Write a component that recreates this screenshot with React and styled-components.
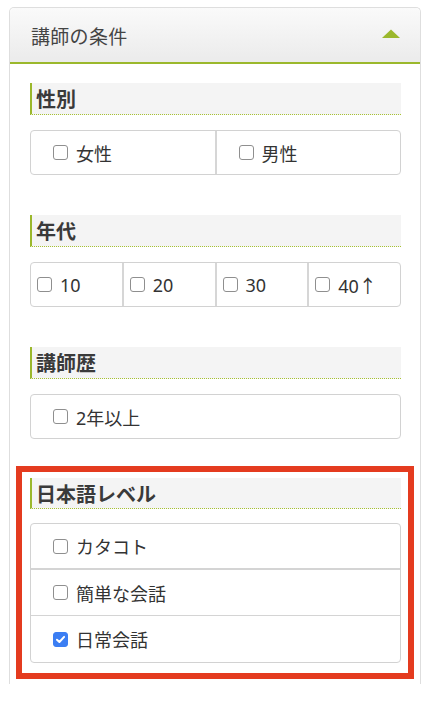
import styled, { createGlobalStyle } from "styled-components";

const GlobalStyle = createGlobalStyle`
  body {
    margin: 0;
    background: #ffffff;
    font-family: "Noto Sans CJK JP", "Noto Sans", sans-serif;
    color: #333;
  }
`;

const sections = [
  { title: "性別", pad: 22, options: [{ label: "女性" }, { label: "男性" }] },
  {
    title: "年代",
    pad: 6,
    options: [{ label: "10" }, { label: "20" }, { label: "30" }, { label: "40↑" }],
  },
  { title: "講師歴", pad: 22, options: [{ label: "2年以上" }] },
];

const levels = [
  { label: "カタコト", checked: false },
  { label: "簡単な会話", checked: false },
  { label: "日常会話", checked: true },
];

const Check = ({ checked }) => (
  <CheckBox $checked={checked}>
    {checked && (
      <svg width="11" height="11" viewBox="0 0 10 10">
        <path d="M1.8 5.2 L4 7.3 L8.3 2.6" fill="none" stroke="#fff" strokeWidth="1.8" strokeLinecap="round" strokeLinejoin="round" />
      </svg>
    )}
  </CheckBox>
);

const Section = ({ title, pad, options }) => (
  <SectionWrap>
    <SectionHead>{title}</SectionHead>
    <OptionRow>
      {options.map((opt) => (
        <Cell key={opt.label} $pad={pad}>
          <Check checked={opt.checked} />
          <Label>{opt.label}</Label>
        </Cell>
      ))}
    </OptionRow>
  </SectionWrap>
);

const App = () => {
  return (
    <>
      <GlobalStyle />
      <Panel>
        <PanelHeader>
          <Title>講師の条件</Title>
          <svg width="18" height="9" viewBox="0 0 18 9">
            <polygon points="0,9 9,0.5 18,9" fill="#9bb82c" />
          </svg>
        </PanelHeader>
        <Content>
          {sections.map((s) => (
            <Section key={s.title} {...s} />
          ))}
          <Highlight>
            <SectionHead $short>日本語レベル</SectionHead>
            <OptionList>
              {levels.map((lv, i) => (
                <ListRow key={lv.label} $divider={i === 0 ? 2 : i === 1 ? 1 : 0}>
                  <Check checked={lv.checked} />
                  <Label>{lv.label}</Label>
                </ListRow>
              ))}
            </OptionList>
          </Highlight>
        </Content>
      </Panel>
    </>
  );
};

export default App;

const Panel = styled.div`
  margin: 7px 10px 0 9px;
  border: 1px solid #dedede;
  border-bottom: none;
  border-radius: 5px 5px 0 0;
  background: #fff;
`;

const PanelHeader = styled.div`
  height: 54px;
  display: flex;
  align-items: center;
  justify-content: space-between;
  padding: 0 20px 0 21px;
  background: linear-gradient(#fafafa, #ebebeb);
  border-bottom: 2px solid #9bb82c;
  border-radius: 5px 5px 0 0;

  svg {
    margin-top: -4px;
  }
`;

const Title = styled.div`
  font-size: 19px;
  color: #444;
  letter-spacing: 0.3px;
`;

const Content = styled.div`
  padding: 19px 19px 5px 20px;
`;

const SectionWrap = styled.div`
  & + & {
    margin-top: 40px;
  }
`;

const SectionHead = styled.div`
  height: ${(p) => (p.$short ? 30 : 31)}px;
  display: flex;
  align-items: center;
  padding-left: 4px;
  background: #f4f4f4;
  border-left: 2px solid #9bb82c;
  border-bottom: 1px dotted #a8c233;
  font-size: 20px;
  font-weight: 700;
  color: #3a3a3a;
`;

const OptionRow = styled.div`
  margin-top: 15px;
  display: flex;
  border: 1px solid #d2d2d2;
  border-radius: 4px;
  overflow: hidden;
`;

const Label = styled.span`
  font-family: "Noto Sans", "Noto Sans CJK JP", sans-serif;
  font-size: 18px;
  color: #333;
`;

const Cell = styled.div`
  flex: 1;
  height: 43px;
  display: flex;
  align-items: center;
  gap: 8px;
  padding-left: ${(p) => p.$pad}px;

  & + & {
    border-left: 2px solid #d6d6d6;
  }
`;

const CheckBox = styled.span`
  width: 15px;
  height: 15px;
  box-sizing: border-box;
  border-radius: 3px;
  display: inline-flex;
  align-items: center;
  justify-content: center;
  flex-shrink: 0;
  border: 1px solid ${(p) => (p.$checked ? "#3b7ef3" : "#8f8f8f")};
  background: ${(p) => (p.$checked ? "#3b7ef3" : "#fff")};
`;

const Highlight = styled.div`
  margin: 27px -13px 0 -14px;
  border: 6px solid #e43b1f;
  padding: 6px 7px 10px 8px;
`;

const OptionList = styled.div`
  margin-top: 14px;
  border: 1px solid #d2d2d2;
  border-radius: 4px;
  overflow: hidden;
`;

const ListRow = styled.div`
  height: ${(p) => 46 - p.$divider}px;
  display: flex;
  align-items: center;
  gap: 8px;
  padding-left: 22px;
  border-bottom: ${(p) => (p.$divider ? `${p.$divider}px solid #d4d4d4` : "none")};
`;
